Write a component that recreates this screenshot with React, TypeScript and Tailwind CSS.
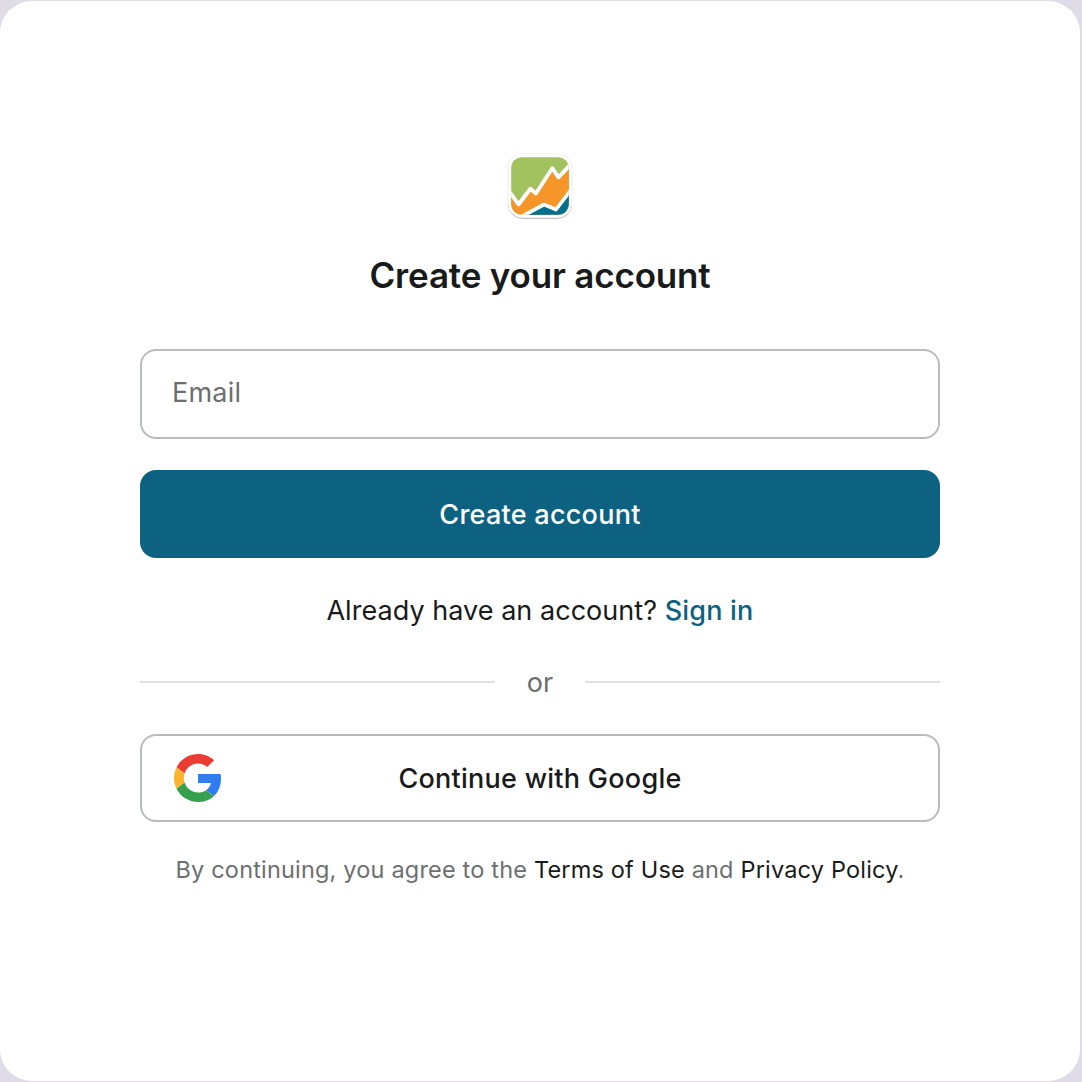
function AppLogo() {
  return (
    <svg width="68" height="68" viewBox="0 0 68 68" className="block" aria-label="Logo">
      <defs>
        <clipPath id="tile">
          <rect x="5.2" y="5.2" width="57.6" height="57.6" rx="10.5" />
        </clipPath>
      </defs>
      <rect x="1.4" y="1.2" width="65.2" height="65.6" rx="15.5" fill="#000" opacity="0.08" />
      <rect x="2" y="2.8" width="64" height="64.2" rx="15" fill="#000" opacity="0.2" />
      <rect x="2.1" y="1.8" width="63.8" height="64" rx="14.5" fill="#fff" />
      <g clipPath="url(#tile)">
        <rect x="5" y="5" width="58" height="58" fill="#a1c25e" />
        <path d="M2 39 L12.7 53.3 L24.3 37.3 L29.8 42.3 L46.3 16.2 L52.2 26.3 L66 11 V70 H2Z" fill="#f69628" />
        <path d="M14 66 L38 53 L50 58 L66 37 V70 H14Z" fill="#00728f" />
        <path d="M2 38 L12.6 52.4 L24.4 36.8 L29.9 41.5 L46.3 16.2 L52.5 25.3 L66 11" fill="none" stroke="#fff" strokeWidth="3.9" strokeLinejoin="round" />
        <path d="M14 65.5 L38 52.5 L50 57.5 L66 36.5" fill="none" stroke="#fff" strokeWidth="3.7" strokeLinejoin="round" />
      </g>
    </svg>
  );
}

function GoogleLogo() {
  return (
    <svg width="48" height="48" viewBox="0 0 48 48" className="block shrink-0" aria-hidden="true">
      <path fill="#EA3C32" d="M24 9.5c3.54 0 6.71 1.22 9.21 3.6l6.85-6.85C35.9 2.38 30.47 0 24 0 14.62 0 6.51 5.38 2.56 13.22l7.98 6.19C12.43 13.72 17.74 9.5 24 9.5z" />
      <path fill="#2F7DEE" d="M46.98 24.55c0-1.57-.15-3.09-.38-4.55H24v9.02h12.94c-.58 2.96-2.26 5.48-4.78 7.18l7.73 6c4.51-4.18 7.09-10.36 7.09-17.65z" />
      <path fill="#FAB42D" d="M10.53 28.59c-.48-1.45-.76-2.99-.76-4.59s.27-3.14.76-4.59l-7.98-6.19C.92 16.46 0 20.12 0 24c0 3.88.92 7.54 2.56 10.78l7.97-6.19z" />
      <path fill="#35A04F" d="M24 48c6.48 0 11.93-2.13 15.89-5.81l-7.73-6c-2.15 1.45-4.92 2.3-8.16 2.3-6.26 0-11.57-4.22-13.47-9.91l-7.98 6.19C6.51 42.62 14.62 48 24 48z" />
    </svg>
  );
}

export default function App() {
  return (
    <div className="h-[1082px] w-[1082px] bg-[#dfdce8] pt-px font-['Inter',sans-serif] text-[#191b1b]">
      <main className="flex h-[1080px] w-[1080px] flex-col items-center rounded-[32px] bg-white pt-[151px]">
        <AppLogo />
        <h1 className="mt-[33px] h-[44px] whitespace-nowrap text-[35px] leading-[44px] font-semibold tracking-[-0.18px]">
          Create your account
        </h1>
        <form className="mt-[52px] flex w-[800px] flex-col" onSubmit={(e) => e.preventDefault()}>
          <input
            type="email"
            placeholder="Email"
            className="h-[90px] rounded-[16px] border-2 border-[#babcbc] px-[30px] pb-[3px] text-[27px] tracking-[0.2px] outline-none placeholder:text-[#6c6f6f]"
          />
          <button className="mt-[31px] h-[88px] rounded-[16px] bg-[#0e6281] pt-[2px] text-[27px] font-medium tracking-[0.26px] text-white">
            Create account
          </button>
        </form>
        <p className="mt-[33px] h-[40px] whitespace-nowrap text-[27px] leading-[40px] tracking-[0.04px]">
          Already have an account? <a className="font-medium tracking-[0.2px] text-[#0e6281]">Sign in</a>
        </p>
        <div className="mt-[31px] flex h-[40px] w-[800px] items-center">
          <span className="h-[2px] flex-1 bg-[#e0e1e1]" />
          <span className="w-[90px] pt-[2px] text-center text-[27px] leading-[40px] text-[#6c6f6f]">or</span>
          <span className="h-[2px] flex-1 bg-[#e0e1e1]" />
        </div>
        <button className="mt-[32px] flex h-[88px] w-[800px] items-center rounded-[16px] border-2 border-[#babcbc] px-[32px] text-[27px] font-medium tracking-[0.26px]">
          <GoogleLogo />
          <span className="flex-1 pt-[2px] pr-[48px] text-center">Continue with Google</span>
        </button>
        <p className="mt-[32px] h-[32px] whitespace-nowrap text-[23.5px] leading-[32px] tracking-[0.18px] text-[#6c6f6f]">
          By continuing, you agree to the <a className="text-[#191b1b]">Terms of Use</a> and{" "}
          <a className="text-[#191b1b]">Privacy Policy</a>.
        </p>
      </main>
    </div>
  );
}
